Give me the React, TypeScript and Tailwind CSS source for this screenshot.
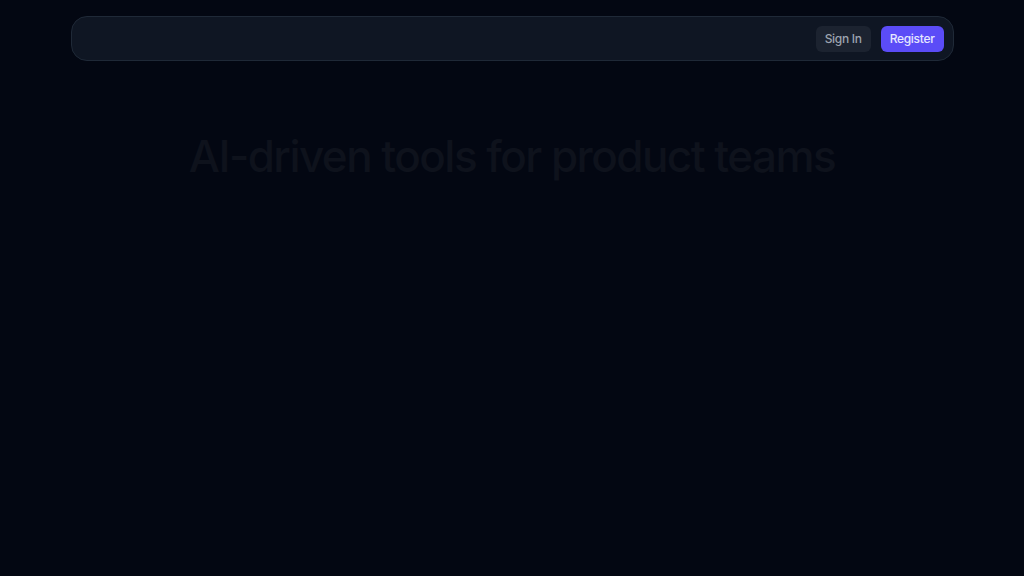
export default function App() {
  return (
    <div
      className="min-h-screen bg-[#030712]"
      style={{ fontFamily: 'Inter, "Noto Sans", sans-serif' }}
    >
      <div className="pt-4">
        <nav className="mx-auto flex h-[45px] w-[883px] items-center justify-end gap-[10px] rounded-2xl border border-[#1f2937] bg-[#0f1623] pr-[9px]">
          <button className="h-[26px] rounded-md bg-[#1c2330] px-[9px] text-[12px] font-medium tracking-tight text-[#9ca3af]">
            Sign In
          </button>
          <button className="h-[26px] rounded-md bg-[#5b4cf7] px-[9px] text-[12px] font-medium tracking-tight text-[#e5e7ff]">
            Register
          </button>
        </nav>
      </div>
      <main className="flex justify-center pt-[73px]">
        <h1 className="text-[44px] font-medium leading-none tracking-[-0.035em] text-[#0e121c]">
          AI-driven tools for product teams
        </h1>
      </main>
    </div>
  );
}
